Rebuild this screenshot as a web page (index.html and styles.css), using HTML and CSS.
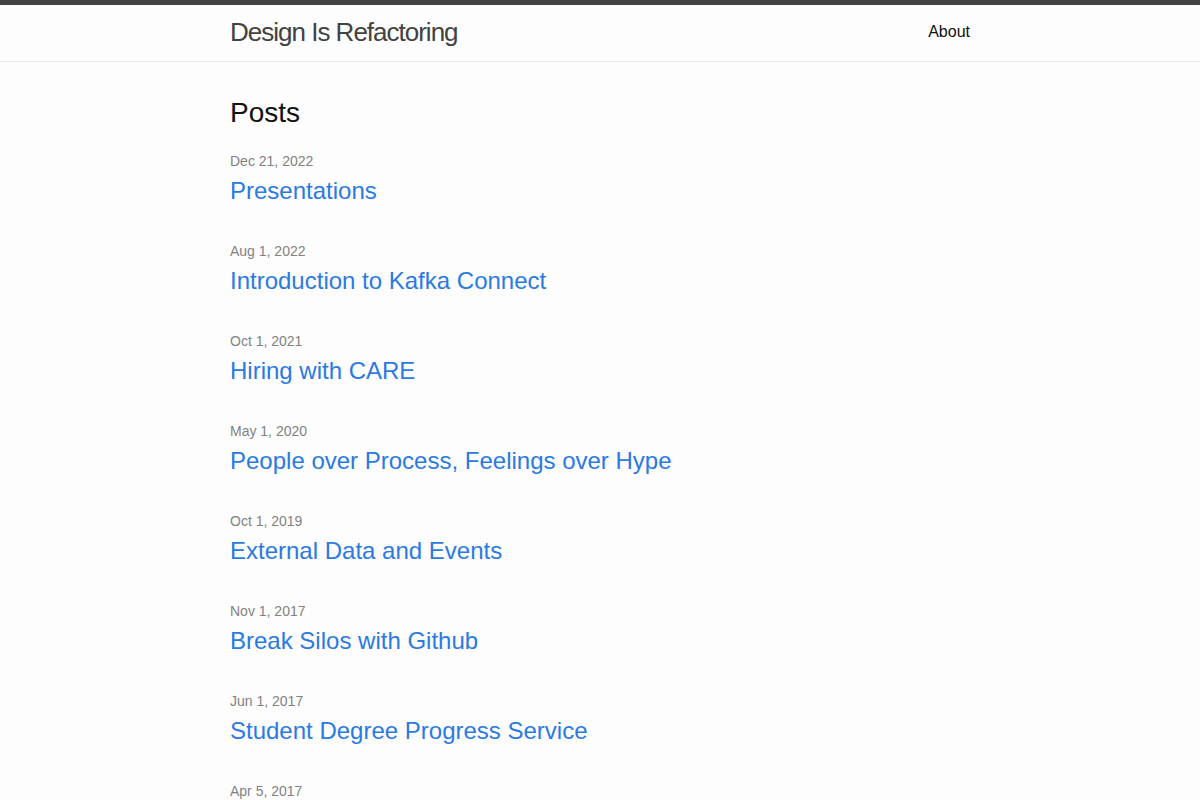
FILE: index.html
```html
<!DOCTYPE html>
<html lang="en">
<head>
<meta charset="utf-8">
<title>Design Is Refactoring</title>
<link rel="stylesheet" href="styles.css">
</head>
<body>
<header class="site-header">
  <div class="wrapper header-inner">
    <a class="site-title" href="#">Design Is Refactoring</a>
    <nav class="site-nav">
      <a class="page-link" href="#">About</a>
    </nav>
  </div>
</header>
<main class="page-content">
  <div class="wrapper">
    <h2 class="post-list-heading">Posts</h2>
    <ul class="post-list">
      <li><span class="post-meta">Dec 21, 2022</span><h3><a class="post-link" href="#">Presentations</a></h3></li>
      <li><span class="post-meta">Aug 1, 2022</span><h3><a class="post-link" href="#">Introduction to Kafka Connect</a></h3></li>
      <li><span class="post-meta">Oct 1, 2021</span><h3><a class="post-link" href="#">Hiring with CARE</a></h3></li>
      <li><span class="post-meta">May 1, 2020</span><h3><a class="post-link" href="#">People over Process, Feelings over Hype</a></h3></li>
      <li><span class="post-meta">Oct 1, 2019</span><h3><a class="post-link" href="#">External Data and Events</a></h3></li>
      <li><span class="post-meta">Nov 1, 2017</span><h3><a class="post-link" href="#">Break Silos with Github</a></h3></li>
      <li><span class="post-meta">Jun 1, 2017</span><h3><a class="post-link" href="#">Student Degree Progress Service</a></h3></li>
      <li><span class="post-meta">Apr 5, 2017</span><h3><a class="post-link" href="#">Design Is Refactoring</a></h3></li>
    </ul>
  </div>
</main>
</body>
</html>
```

FILE: styles.css
```css
* { box-sizing: border-box; }
html, body, h1, h2, h3, ul, li { margin: 0; padding: 0; }
body {
  font: 400 16px/1.5 "Liberation Sans", Arial, sans-serif;
  color: #111111;
  background-color: #fdfdfd;
}
a { text-decoration: none; }
.wrapper {
  max-width: 800px;
  margin: 0 auto;
  padding: 0 30px;
}
.site-header {
  box-sizing: content-box;
  border-top: 5px solid #424242;
  border-bottom: 1px solid #e8e8e8;
  min-height: 55.95px;
}
.header-inner {
  display: flex;
  justify-content: space-between;
  align-items: flex-start;
}
.site-title {
  font-size: 26px;
  font-weight: 300;
  line-height: 54px;
  letter-spacing: -1px;
  color: #424242;
}
.site-nav { line-height: 54px; }
.page-link { color: #111111; }
.page-content { padding: 30px 0; }
.post-list-heading {
  font-size: 28px;
  font-weight: 400;
  margin-bottom: 15px;
}
.post-list { list-style: none; }
.post-list li { margin-bottom: 30px; }
.post-meta { font-size: 14px; color: #828282; }
.post-list h3 { font-weight: 400; margin-bottom: 15px; font-size: 24px; line-height: 36px; }
.post-link { display: block; font-size: 24px; color: #2a7ae2; }
```
